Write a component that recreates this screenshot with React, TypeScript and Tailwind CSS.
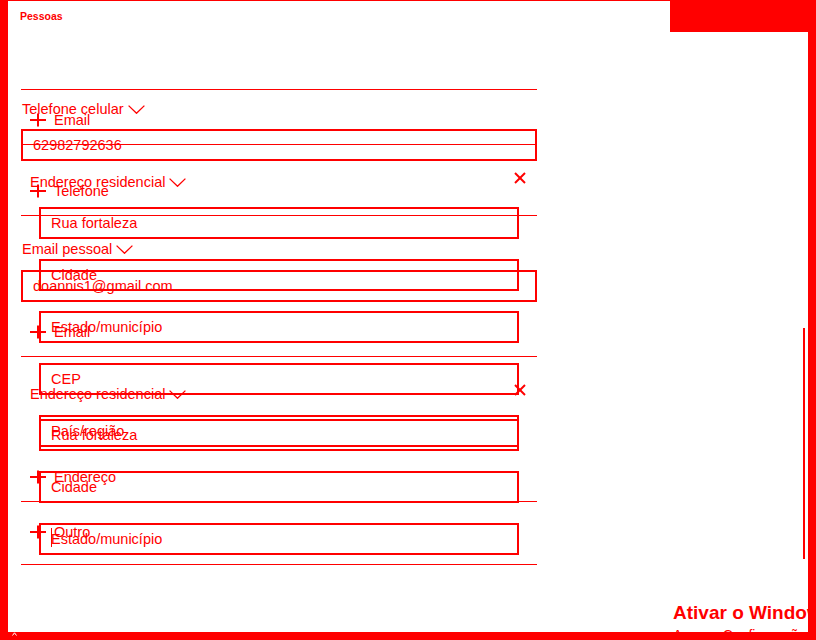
import React from "react";

const Plus = () => (
  <svg width="16" height="16" viewBox="0 0 16 16" className="shrink-0">
    <rect x="0" y="7" width="16" height="2" fill="#ff0000" />
    <rect x="7" y="1.5" width="2" height="13" fill="#ff0000" />
  </svg>
);

const Chevron = () => (
  <svg width="17" height="9" viewBox="0 0 17 9" className="ml-[4px] shrink-0">
    <polyline points="0.6,0.6 8.5,8.3 16.4,0.6" fill="none" stroke="#ff0000" strokeWidth="1.3" />
  </svg>
);

const Close = () => (
  <svg width="12" height="12" viewBox="0 0 12 12" className="shrink-0">
    <line x1="1" y1="1" x2="11" y2="11" stroke="#ff0000" strokeWidth="2" />
    <line x1="11" y1="1" x2="1" y2="11" stroke="#ff0000" strokeWidth="2" />
  </svg>
);

const Sep = ({ className }: { className: string }) => (
  <div className={"h-px bg-[#ff0000] " + className} />
);

const Label = ({ children, className }: { children: React.ReactNode; className: string }) => (
  <div className={"flex items-center h-[20px] leading-[20px] text-[14.5px] " + className}>
    <span className="whitespace-nowrap">{children}</span>
    <Chevron />
  </div>
);

const Box = ({
  children,
  className,
  cursor,
}: {
  children: React.ReactNode;
  className?: string;
  cursor?: boolean;
}) => (
  <div
    className={
      "relative h-[32px] border-2 border-[#ff0000] flex items-center px-[10px] text-[14.5px] leading-[20px] " +
      (className || "")
    }
  >
    <span className="whitespace-nowrap">{children}</span>
    {cursor && <span className="absolute left-[10px] top-[3px] w-px h-[19px] bg-[#ff0000]" />}
  </div>
);

const AddRow = ({ label, className }: { label: string; className?: string }) => (
  <div className={"flex items-center h-[40px] pl-[9px] gap-[8px] text-[14.5px] leading-[20px] " + (className || "mt-[10px]")}>
    <Plus />
    <span className="whitespace-nowrap">{label}</span>
  </div>
);

const Content = ({ cursor }: { cursor: boolean }) => (
  <div className="text-[#ff0000]">
    <div className="pt-[8px] pl-[12px] text-[10.5px] leading-[14px] font-bold">Pessoas</div>
    <div className="ml-[13px] w-[516px]">
      <Label className="mt-[76px] pl-px">Telefone celular</Label>
      <Box className="mt-[10px]">62982792636</Box>
      <AddRow label="Telefone" />
      <Sep className="mt-[4px]" />
      <Label className="mt-[23px] pl-px">Email pessoal</Label>
      <Box className="mt-[11px]">doannis1@gmail.com</Box>
      <AddRow label="Email" />
      <Sep className="mt-[4px]" />
      <div className="mt-[27px] flex items-start justify-between h-[20px] pl-[9px] pr-[11px]">
        <Label className="">Endereço residencial</Label>
        <Close />
      </div>
      <div className="mt-[15px] pl-[18px] flex flex-col gap-[20px]">
        <Box className="w-[480px]">Rua fortaleza</Box>
        <Box className="w-[480px]">Cidade</Box>
        <Box className="w-[480px]" cursor={cursor}>
          Estado/município
        </Box>
        <Box className="w-[480px]">CEP</Box>
        <Box className="w-[480px]">País/região</Box>
      </div>
      <AddRow label="Endereço" />
      <Sep className="mt-[4px]" />
      <AddRow label="Outro" className="mt-[10px]" />
      <Sep className="mt-[12px]" />
    </div>
  </div>
);

export default function App() {
  return (
    <div className="relative w-[816px] h-[640px] bg-[#ff0000] pl-[8px] pr-[8px] pt-px pb-[8px] font-['Liberation_Sans',Arial,sans-serif]">
      <div className="relative w-full h-full bg-white overflow-hidden">
        {/* first rendering of the list */}
        <div className="h-[559px] overflow-hidden">
          <Content cursor={true} />
        </div>
        {/* second, shifted rendering painted over it */}
        <div className="absolute left-0 right-0 top-[88px] bottom-0 overflow-hidden">
          <div className="-mt-[300px]">
            <Content cursor={false} />
          </div>
        </div>
        {/* title bar buttons area */}
        <div className="absolute top-0 right-0 w-[138px] h-[31px] bg-[#ff0000]" />
        {/* scrollbar */}
        <div className="absolute left-[795px] top-[327px] w-[2px] h-[231px] bg-[#ff0000]" />
        {/* activation watermark */}
        <div className="absolute left-[665px] top-[600px] text-[#ff0000] whitespace-nowrap">
          <div className="text-[19px] leading-[24px] font-bold">Ativar o Windows</div>
          <div className="text-[14px] leading-[20px]">Acesse Configurações para ativar o Windows.</div>
        </div>
      </div>
      <svg width="5" height="4" viewBox="0 0 5 4" className="absolute left-[12px] top-[632px]">
        <polyline points="0.5,3.5 2.5,0.8 4.5,3.5" fill="none" stroke="#ffffff" strokeWidth="1" />
      </svg>
    </div>
  );
}
